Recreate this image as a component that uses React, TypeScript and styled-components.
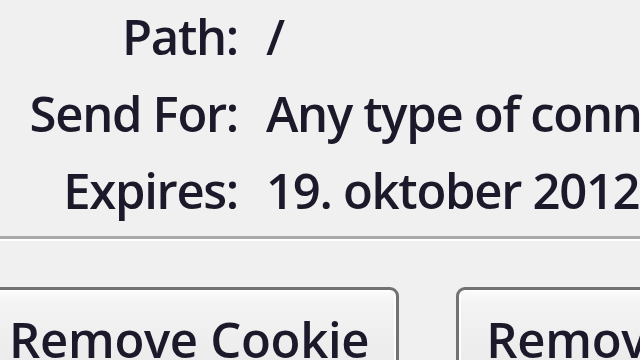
import React from "react";
import styled, { createGlobalStyle } from "styled-components";

const Global = createGlobalStyle`
  html, body { margin: 0; padding: 0; background: #f0f0f0; }
  body { overflow: hidden; }
`;

const Page = styled.div`
  width: 640px;
  height: 360px;
  overflow: hidden;
  background: #f0f0f0;
  font-family: "Open Sans", "Noto Sans", sans-serif;
  font-size: 49px;
  font-weight: 600;
  letter-spacing: -1.3px;
  color: #1c1a2a;
`;

const Details = styled.div`
  display: grid;
  grid-template-columns: 238px max-content;
  column-gap: 28px;
  line-height: 77px;
  margin-top: -2px;
`;

const Label = styled.div`
  text-align: right;
  white-space: nowrap;
`;

const Value = styled.div`
  white-space: nowrap;
`;

const Separator = styled.div`
  margin-top: 7px;
  height: 0;
  border-top: 3px solid #a9a9a9;
  border-bottom: 2px solid #ffffff;
`;

const ButtonRow = styled.div`
  display: flex;
  gap: 57px;
  margin-top: 46px;
  margin-left: -21px;
`;

const Button = styled.button`
  flex: none;
  font: inherit;
  letter-spacing: -0.3px;
  color: inherit;
  white-space: nowrap;
  border: 3px solid #727272;
  border-radius: 9px;
  padding: 15px 27px 20px 27px;
  background: linear-gradient(#fbfbfb 0px, #f3f3f3 14px, #ececec 70px, #e3e3e3 100px);
  box-shadow: inset 0 0 0 2px #fdfdfd;
  line-height: 68px;
`;

const rows: [string, string][] = [
  ["Path:", "/"],
  ["Send For:", "Any type of connection"],
  ["Expires:", "19. oktober 2012 12:00:00"],
];

export default function App() {
  return (
    <Page>
      <Global />
      <Details>
        {rows.map(([l, v]) => (
          <React.Fragment key={l}>
            <Label>{l}</Label>
            <Value>{v}</Value>
          </React.Fragment>
        ))}
      </Details>
      <Separator />
      <ButtonRow>
        <Button>Remove Cookie</Button>
        <Button>Remove All Cookies</Button>
      </ButtonRow>
    </Page>
  );
}
